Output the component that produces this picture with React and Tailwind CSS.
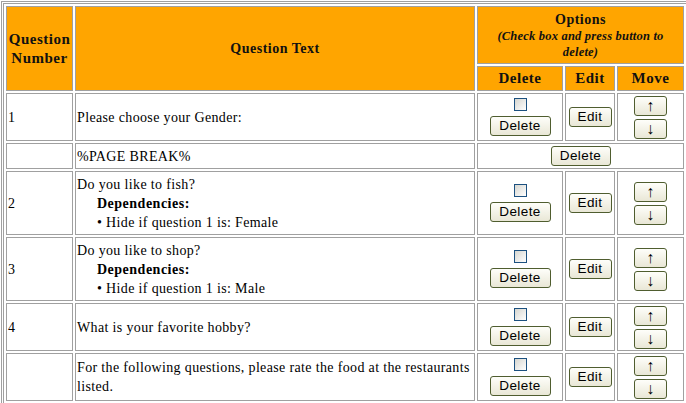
import React from 'react';

const Btn = ({ children, className = '' }) => (
  <button
    type="button"
    className={`h-[20px] rounded-[3px] border border-[#4f5d2f] bg-linear-to-b from-[#fefefa] to-[#e9e7d6] font-['Liberation_Sans',sans-serif] leading-none text-black ${className}`}
  >
    {children}
  </button>
);

const Check = () => (
  <div className="h-[13px] w-[13px] border border-[#1c5180] bg-linear-to-br from-[#d6d6d0] to-white" />
);

const Cell = ({ children, className = '' }) => (
  <div className={`flex items-center border border-[#a0a0a0] p-px ${className}`}>{children}</div>
);

const Head = ({ children, className = '' }) => (
  <div className={`flex flex-col items-center justify-center border border-[#a0a0a0] bg-[#ffa500] text-center font-bold tracking-[0.5px] text-[#111] ${className}`}>
    {children}
  </div>
);

const Options = () => (
  <>
    <Cell className="flex-col justify-center gap-[5px]">
      <Check />
      <Btn className="w-[61px] text-[13.5px] tracking-[0.4px]">Delete</Btn>
    </Cell>
    <Cell className="justify-center">
      <Btn className="w-[43px] text-[13.5px] tracking-[0.4px]">Edit</Btn>
    </Cell>
    <Cell className="flex-col justify-center gap-[3px]">
      <Btn className="w-[33px] text-[16px]">↑</Btn>
      <Btn className="w-[33px] text-[16px]">↓</Btn>
    </Cell>
  </>
);

const Deps = ({ text }) => (
  <div className="ml-[20px]">
    <div className="font-bold tracking-[0.5px]">Dependencies:</div>
    <div>• {text}</div>
  </div>
);

export default function App() {
  return (
    <div className="h-[403px] w-[686px] overflow-hidden bg-white pl-px pt-px font-['Liberation_Serif',serif] text-[14px] leading-[19px] text-black">
      <div className="w-[700px] border-[3px] border-double border-[#a0a0a0] p-[2px]">
        <div className="grid grid-cols-[67px_400px_86px_50px_67px] grid-rows-[58px_25px_48px_26px_64px_64px_48px_48px] gap-[2px] tracking-[0.35px]">
          <Head className="row-span-2 text-[15px]">
            <span>Question</span>
            <span>Number</span>
          </Head>
          <Head className="row-span-2">Question Text</Head>
          <Head className="col-span-3 leading-[17px]">
            <span>Options</span>
            <span className="text-[12.5px] italic leading-[16px] tracking-[0.2px]">
              (Check box and press button to
              <br />
              delete)
            </span>
          </Head>
          <Head className="text-[15px]">Delete</Head>
          <Head className="text-[15px]">Edit</Head>
          <Head className="text-[15px]">Move</Head>

          <Cell>1</Cell>
          <Cell>Please choose your Gender:</Cell>
          <Options />

          <Cell />
          <Cell>%PAGE BREAK%</Cell>
          <Cell className="col-span-3 justify-center">
            <Btn className="w-[60px] text-[13.5px] tracking-[0.4px]">Delete</Btn>
          </Cell>

          <Cell>2</Cell>
          <Cell>
            <div>
              <div>Do you like to fish?</div>
              <Deps text="Hide if question 1 is: Female" />
            </div>
          </Cell>
          <Options />

          <Cell>3</Cell>
          <Cell>
            <div>
              <div>Do you like to shop?</div>
              <Deps text="Hide if question 1 is: Male" />
            </div>
          </Cell>
          <Options />

          <Cell>4</Cell>
          <Cell>What is your favorite hobby?</Cell>
          <Options />

          <Cell />
          <Cell>
            <div>
              For the following questions, please rate the food at the restaurants
              <br />
              listed.
            </div>
          </Cell>
          <Options />
        </div>
      </div>
    </div>
  );
}
